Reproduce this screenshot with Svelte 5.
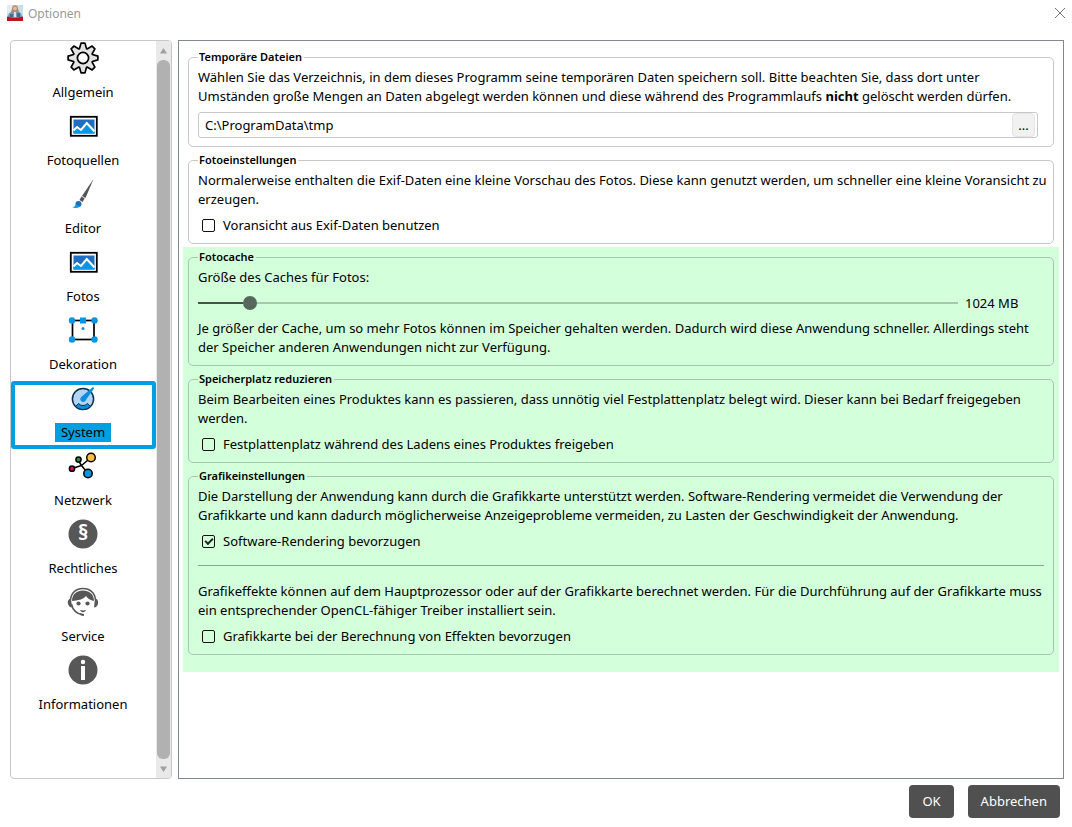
<script lang="ts">
	interface Category {
		icon: string;
		label: string;
	}

	const categories: Category[] = [
		{ icon: 'gear', label: 'Allgemein' },
		{ icon: 'picture', label: 'Fotoquellen' },
		{ icon: 'brush', label: 'Editor' },
		{ icon: 'picture', label: 'Fotos' },
		{ icon: 'frame', label: 'Dekoration' },
		{ icon: 'gauge', label: 'System' },
		{ icon: 'network', label: 'Netzwerk' },
		{ icon: 'law', label: 'Rechtliches' },
		{ icon: 'service', label: 'Service' },
		{ icon: 'info', label: 'Informationen' }
	];

	let selected = $state(5);
	let tempDir = $state('C:\\ProgramData\\tmp');
	let exifPreview = $state(false);
	let cacheSize = $state(1024);
	let freeDisk = $state(false);
	let softwareRendering = $state(true);
	let gpuEffects = $state(false);

	const cacheMin = 128;
	const cacheMax = 15104;
	let fill = $derived(((cacheSize - cacheMin) / (cacheMax - cacheMin)) * 100);

	// outline of the eight-toothed gear, centred on 16,16
	function gearPath() {
		let d = '';
		for (let i = 0; i < 8; i++) {
			const a = (i * Math.PI) / 4 - Math.PI / 2;
			const pts = [
				[10, -0.36],
				[15, -0.13],
				[15, 0.13],
				[10, 0.36]
			];
			for (const [r, o] of pts) {
				const x = (16 + r * Math.cos(a + o)).toFixed(2);
				const y = (16 + r * Math.sin(a + o)).toFixed(2);
				d += (d ? 'L' : 'M') + x + ' ' + y;
			}
		}
		return d + 'Z';
	}
</script>

{#snippet glyph(name: string)}
	<svg class="icon" viewBox="0 0 32 32" aria-hidden="true">
		{#if name === 'gear'}
			<path d={gearPath()} fill="#e3e3e3" stroke="#000" stroke-width="1.7" stroke-linejoin="round" />
			<circle cx="16" cy="16" r="5.6" fill="#fff" stroke="#000" stroke-width="1.7" />
		{:else if name === 'picture'}
			<rect x="3.8" y="6.8" width="26" height="19" fill="#fff" stroke="#000" stroke-width="1.8" />
			<rect x="6.5" y="9.5" width="21" height="14" fill="#1f6fc0" />
			<path d="M6.5 19.5 10 16l4 3.5 6-6.5 7.5 8v2.500h-21z" fill="#0696e3" />
			<path d="M6.5 20.500 10 17l4 3 5.800-7 7.700 8.500" fill="none" stroke="#fff" stroke-width="2" />
		{:else if name === 'brush'}
			<path d="M26.500 1 18.500 20l-3.500-2z" fill="#555" />
			<path d="m14.500 18.500 3.200 2-2.200 3.500-3-2z" fill="#555" />
			<circle cx="11.500" cy="26" r="3" fill="#1f6fc0" />
			<path d="M8.800 26.500c-.7 1.500-2 2.500-3.500 3 3 .8 5.700.5 7.500-.8z" fill="#0ea2e8" />
		{:else if name === 'frame'}
			<rect x="5.500" y="6.500" width="21.500" height="19" fill="#fff" stroke="#000" stroke-width="1.700" />
			<g fill="#0696e3">
				<circle cx="5" cy="6.500" r="3.200" />
				<circle cx="27.500" cy="6.500" r="3.200" />
				<circle cx="5" cy="25.500" r="3.200" />
				<circle cx="27.500" cy="25.500" r="3.200" />
				<rect x="13" y="3.500" width="6" height="6" />
				<circle cx="16" cy="14.500" r="1.500" />
			</g>
		{:else if name === 'gauge'}
			<circle cx="16" cy="17" r="10.600" fill="#b3d4f3" stroke="#0b2f4d" stroke-width="1.500" />
			<path d="M8.500 24.500a10.600 10.600 0 0 0 15 0l-3-3a6 6 0 0 1-9 0z" fill="#0a8fe0" stroke="#0b2f4d" />
			<path d="m26 5 1.300 1.300-8 11c-.5 2.500-3.500 3.600-5.300 1.700-1.400-1.600-.7-3.700 1-4.700z" fill="#0a8fe0" />
		{:else if name === 'network'}
			<g stroke="#000" stroke-width="1.500">
				<path d="M14.500 15.500 24 7.500M14.500 15.500 11 10M14.500 15.500 5 18.500M14.500 15.500 21 23.500" />
				<circle cx="24" cy="7.500" r="4.300" fill="#f9bc45" />
				<circle cx="11.500" cy="9.500" r="2.600" fill="#21952f" />
				<circle cx="5" cy="18.700" r="2.600" fill="#e0006f" />
				<circle cx="21" cy="23.500" r="4.200" fill="#0696e3" />
			</g>
		{:else if name === 'law'}
			<circle cx="16" cy="16" r="14.500" fill="#575757" />
			<text x="16" y="22" class="sign">§</text>
		{:else if name === 'service'}
			<path d="M3.500 14C4 7 9 2.500 16 2.500S28 7 28.500 14M4.500 18c1 5.500 4.800 9.700 11.500 11" fill="none" stroke="#575757" stroke-width="1.500" />
			<path d="M5 15C5 8 10 4.500 16 4.500S27 8 27 15c-3.500-.5-6.500-2.500-8-5-3 3.500-8 4.500-14 5z" fill="#575757" />
			<path d="M4 12.500C1 13 .2 16 1.200 18.500c.8 2 2.100 2.700 3.800 3zM28 12.500c3 .5 3.800 3.500 2.800 6-.8 2-2.100 2.700-3.800 3z" fill="#575757" />
			<circle cx="11.500" cy="17.500" r="2.100" fill="#575757" />
			<circle cx="20.500" cy="17.500" r="2.100" fill="#575757" />
			<path d="M13 24c2 .6 4 .6 6 0-1.500 3-4.500 3-6 0zM13 27.300l4 .8v1.800l-4-.8z" fill="#575757" />
		{:else}
			<circle cx="16" cy="16" r="14.500" fill="#575757" />
			<circle cx="16" cy="8" r="2.200" fill="#fff" />
			<rect x="14" y="12" width="4" height="14" fill="#fff" />
		{/if}
	</svg>
{/snippet}

<div class="dialog">
	<header>
		<svg class="app-icon" viewBox="0 0 16 16" aria-hidden="true">
			<rect width="16" height="16" fill="#c8e0e8" />
			<path d="M0 0h5v8H0z" fill="#e6ecea" />
			<path d="M5 4c0-5 6-5 6 0l1 3H4z" fill="#b8805a" />
			<circle cx="8" cy="3.500" r="2" fill="#e8b89a" />
			<path d="M1 12c0-4 3-6 7-6s7 2 7 6z" fill="#6f9fb8" />
			<path d="M3 9h3v3H3zM10 8h3v4h-3z" fill="#496b85" />
			<path d="M7 7h2v5H7z" fill="#d9e3e8" />
			<path d="M0 11.500q8 2 16 0V16H0z" fill="#c8101c" />
		</svg>
		<h1>Optionen</h1>
		<button class="close" aria-label="Schließen">
			<svg viewBox="0 0 12 12" aria-hidden="true"><path d="m1 1 10 10M11 1 1 11" stroke="#777" fill="none" /></svg>
		</button>
	</header>

	<main>
		<nav>
			<div class="categories">
				{#each categories as item, i}
					<button class="category" class:selected={selected === i} onclick={() => (selected = i)}>
						{@render glyph(item.icon)}
						<span class="category-label">{item.label}</span>
					</button>
				{/each}
			</div>
			<div class="scrollbar" aria-hidden="true">
				<svg viewBox="0 0 15 18"><path d="M4 12 7.500 6.500 11 12z" fill="#a0a0a0" /></svg>
				<div class="thumb"></div>
				<svg viewBox="0 0 15 18"><path d="M4 7 7.500 12.500 11 7z" fill="#a0a0a0" /></svg>
			</div>
		</nav>

		<div class="panel">
			<section>
				<fieldset>
					<legend>Temporäre Dateien</legend>
					<p>
						Wählen Sie das Verzeichnis, in dem dieses Programm seine temporären Daten speichern soll. Bitte beachten Sie, dass dort unter
						Umständen große Mengen an Daten abgelegt werden können und diese während des Programmlaufs <b>nicht</b> gelöscht werden dürfen.
					</p>
					<div class="path">
						<input type="text" aria-label="Verzeichnis" bind:value={tempDir} />
						<button aria-label="Durchsuchen">...</button>
					</div>
				</fieldset>

				<fieldset>
					<legend>Fotoeinstellungen</legend>
					<p>
						Normalerweise enthalten die Exif-Daten eine kleine Vorschau des Fotos. Diese kann genutzt werden, um schneller eine kleine Voransicht zu
						erzeugen.
					</p>
					<label class="check">
						<input type="checkbox" bind:checked={exifPreview} />
						Voransicht aus Exif-Daten benutzen
					</label>
				</fieldset>
			</section>

			<section class="highlight">
				<fieldset>
					<legend>Fotocache</legend>
					<label for="cache">Größe des Caches für Fotos:</label>
					<div class="slider">
						<input id="cache" type="range" min={cacheMin} max={cacheMax} step="128" bind:value={cacheSize} style="--fill: {fill}%" />
						<output for="cache">{cacheSize} MB</output>
					</div>
					<p>
						Je größer der Cache, um so mehr Fotos können im Speicher gehalten werden. Dadurch wird diese Anwendung schneller. Allerdings steht
						der Speicher anderen Anwendungen nicht zur Verfügung.
					</p>
				</fieldset>

				<fieldset>
					<legend>Speicherplatz reduzieren</legend>
					<p>
						Beim Bearbeiten eines Produktes kann es passieren, dass unnötig viel Festplattenplatz belegt wird. Dieser kann bei Bedarf freigegeben
						werden.
					</p>
					<label class="check">
						<input type="checkbox" bind:checked={freeDisk} />
						Festplattenplatz während des Ladens eines Produktes freigeben
					</label>
				</fieldset>

				<fieldset>
					<legend>Grafikeinstellungen</legend>
					<p>
						Die Darstellung der Anwendung kann durch die Grafikkarte unterstützt werden. Software-Rendering vermeidet die Verwendung der
						Grafikkarte und kann dadurch möglicherweise Anzeigeprobleme vermeiden, zu Lasten der Geschwindigkeit der Anwendung.
					</p>
					<label class="check">
						<input type="checkbox" bind:checked={softwareRendering} />
						Software-Rendering bevorzugen
					</label>
					<hr />
					<p>
						Grafikeffekte können auf dem Hauptprozessor oder auf der Grafikkarte berechnet werden. Für die Durchführung auf der Grafikkarte muss
						ein entsprechender OpenCL-fähiger Treiber installiert sein.
					</p>
					<label class="check">
						<input type="checkbox" bind:checked={gpuEffects} />
						Grafikkarte bei der Berechnung von Effekten bevorzugen
					</label>
				</fieldset>
			</section>
		</div>
	</main>

	<footer>
		<button>OK</button>
		<button>Abbrechen</button>
	</footer>
</div>

<style>
	:global(body) {
		margin: 0;
		background: #fff;
	}

	.dialog {
		--line: #c8c8c8;
		--blue: #009fe3;
		display: flex;
		flex-direction: column;
		box-sizing: border-box;
		min-height: 100vh;
		font-family: 'Segoe UI', 'Noto Sans', sans-serif;
		font-size: 13px;
		line-height: 19px;
		color: #000;
	}

	button,
	input {
		font: inherit;
		color: inherit;
		margin: 0;
	}

	header {
		display: flex;
		align-items: center;
		height: 26px;
		padding: 0 6px 0 7px;
		margin-bottom: 14px;
	}

	.app-icon {
		width: 16px;
		height: 16px;
	}

	h1 {
		flex: 1;
		margin: 0 0 0 5px;
		font-size: 12px;
		font-weight: 400;
		color: #999;
	}

	.close {
		display: flex;
		padding: 0;
		border: none;
		background: none;
	}

	.close svg {
		width: 12px;
		height: 12px;
	}

	main {
		display: flex;
		flex: 1;
		gap: 6px;
		padding: 0 8px 0 10px;
	}

	nav {
		display: flex;
		flex: none;
		width: 160px;
		border: 1px solid var(--line);
		border-radius: 4px;
		overflow: hidden;
	}

	.categories {
		flex: 1;
	}

	.category {
		display: flex;
		flex-direction: column;
		align-items: center;
		gap: 9px;
		box-sizing: border-box;
		width: 100%;
		height: 68px;
		padding: 1px 1px 0 0;
		border: none;
		background: none;
	}

	.category.selected {
		outline: 4px solid var(--blue);
		outline-offset: -4px;
		border-radius: 3px;
	}

	.icon {
		width: 32px;
		height: 32px;
	}

	.category-label {
		padding: 0 6px;
	}

	.selected .category-label {
		background: var(--blue);
	}

	.sign {
		font-size: 21px;
		font-weight: 700;
		fill: #fff;
		text-anchor: middle;
	}

	.scrollbar {
		display: flex;
		flex-direction: column;
		width: 15px;
		background: #e9e9e9;
	}

	.scrollbar svg {
		flex: none;
		height: 19px;
	}

	.thumb {
		flex: 1;
		margin: 0 1px;
		border-radius: 6px;
		background: #b1b1b1;
	}

	.panel {
		flex: 1;
		padding: 8px 4px;
		border: 1px solid #828790;
	}

	section {
		display: flex;
		flex-direction: column;
		gap: 5px;
		padding: 0 5px 3px;
	}

	.highlight {
		--line: #a8c8ad;
		padding: 2px 5px 17px;
		background: #d4ffdb;
	}

	fieldset {
		display: flex;
		flex-direction: column;
		gap: 6px;
		min-width: 0;
		margin: 0;
		padding: 3px 9px 8px;
		border: 1px solid var(--line);
		border-radius: 5px;
	}

	legend {
		padding: 0 2px 0 1px;
		font-size: 11px;
		font-weight: 600;
		line-height: 16px;
	}

	p {
		margin: 0 -6px 0 0;
	}

	.path {
		display: flex;
		box-sizing: border-box;
		height: 26px;
		margin-right: 6px;
		padding-right: 2px;
		border: 1px solid var(--line);
		border-radius: 3px;
	}

	.path input {
		flex: 1;
		min-width: 0;
		padding: 0 6px;
		border: none;
		background: none;
		outline: none;
	}

	.path button {
		width: 23px;
		padding: 0;
		border: 1px solid #e4e4e4;
		border-radius: 4px;
		background: #f1f1f1;
	}

	.check {
		display: flex;
		align-items: center;
		gap: 8px;
		height: 20px;
		padding-left: 4px;
	}

	.check input {
		appearance: none;
		box-sizing: border-box;
		width: 13px;
		height: 13px;
		border: 1px solid #111;
		border-radius: 2px;
	}

	.check input:checked {
		background: linear-gradient(#111, #111) 0 0 / 0 0 no-repeat;
	}

	.check input:checked::before {
		content: '';
		display: block;
		box-sizing: border-box;
		width: 8px;
		height: 5px;
		margin: 2px 0 0 2px;
		border: solid #222;
		border-width: 0 0 2px 2px;
		transform: rotate(-45deg);
	}

	.slider {
		display: flex;
		align-items: center;
		gap: 7px;
		height: 20px;
	}

	.slider input {
		appearance: none;
		flex: 1;
		height: 14px;
		background: linear-gradient(#46534a, #46534a) 0 6px / var(--fill) 2px no-repeat,
			linear-gradient(#a8c8ad, #a8c8ad) 0 6px / 100% 2px no-repeat;
	}

	.slider input::-webkit-slider-thumb {
		appearance: none;
		width: 14px;
		height: 14px;
		border-radius: 50%;
		background: #56685b;
	}

	output {
		width: 79px;
	}

	hr {
		width: 100%;
		margin: 8px 0 10px;
		border: none;
		border-top: 1px solid #87a68b;
	}

	footer {
		display: flex;
		justify-content: flex-end;
		gap: 14px;
		padding: 6px 12px 9px;
	}

	footer button {
		height: 33px;
		padding: 0 13px;
		border: none;
		border-radius: 4px;
		background: #505050;
		color: #fff;
	}
</style>
